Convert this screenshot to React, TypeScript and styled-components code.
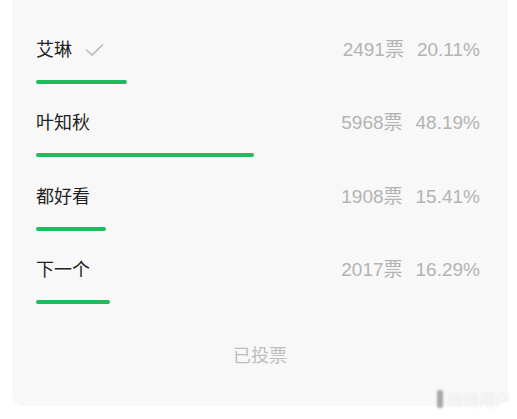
import React from "react";
import styled, { createGlobalStyle } from "styled-components";

const Global = createGlobalStyle`
  html, body { margin: 0; padding: 0; background: #ffffff; }
  body { font-family: "Liberation Sans", "Noto Sans CJK SC", sans-serif; }
`;

const Page = styled.div`
  position: relative;
  width: 517px;
  height: 419px;
  overflow: hidden;
  background: #ffffff;
`;

const Card = styled.div`
  margin: 0 9px 0 12px;
  background: #f8f8f8;
  border-radius: 0 0 12px 12px;
  padding: 38px 28px 38px 24px;
  display: flex;
  flex-direction: column;
  gap: 27.3px;
`;

const Row = styled.div`
  display: flex;
  flex-direction: column;
`;

const Header = styled.div`
  display: flex;
  align-items: center;
  justify-content: space-between;
  height: 24px;
`;

const Name = styled.div`
  display: flex;
  align-items: center;
  gap: 13px;
  font-size: 18px;
  color: #222222;
  line-height: 24px;
`;

const Stats = styled.div`
  display: flex;
  gap: 13px;
  font-size: 19px;
  color: #b3b3b3;
  line-height: 24px;
`;

const Bar = styled.div`
  margin-top: 18px;
  height: 4px;
  border-radius: 2px;
  background: #1dbd5f;
`;

const Footer = styled.div`
  margin-top: 13px;
  text-align: center;
  font-size: 18px;
  line-height: 24px;
  color: #bdbdbd;
  padding-left: 4px;
`;

const Watermark = styled.div`
  position: absolute;
  right: 6px;
  bottom: 8px;
  display: flex;
  align-items: center;
  gap: 4px;
  font-size: 16px;
  color: #ececec;
  filter: blur(1.2px);
`;

const Mark = styled.span`
  display: inline-block;
  width: 6px;
  height: 18px;
  background: #a8a8a8;
  border-radius: 2px;
`;

const Check = () => (
  <svg width="19" height="14" viewBox="0 0 19 14" fill="none">
    <path d="M1.5 7 L7 12.2 L17.5 1.8" stroke="#bdbdbd" strokeWidth="1.7" strokeLinecap="round" strokeLinejoin="round" />
  </svg>
);

const options = [
  { name: "艾琳", votes: 2491, pct: "20.11", chosen: true },
  { name: "叶知秋", votes: 5968, pct: "48.19", chosen: false },
  { name: "都好看", votes: 1908, pct: "15.41", chosen: false },
  { name: "下一个", votes: 2017, pct: "16.29", chosen: false },
];

export default function App() {
  return (
    <Page>
      <Global />
      <Card>
        {options.map((o) => (
          <Row key={o.name}>
            <Header>
              <Name>
                {o.name}
                {o.chosen && <Check />}
              </Name>
              <Stats>
                <span>{o.votes}票</span>
                <span>{o.pct}%</span>
              </Stats>
            </Header>
            <Bar style={{ width: `${parseFloat(o.pct) * 4.52}px` }} />
          </Row>
        ))}
        <Footer>已投票</Footer>
      </Card>
      <Watermark>
        <Mark />
        <span>微博用户</span>
      </Watermark>
    </Page>
  );
}
